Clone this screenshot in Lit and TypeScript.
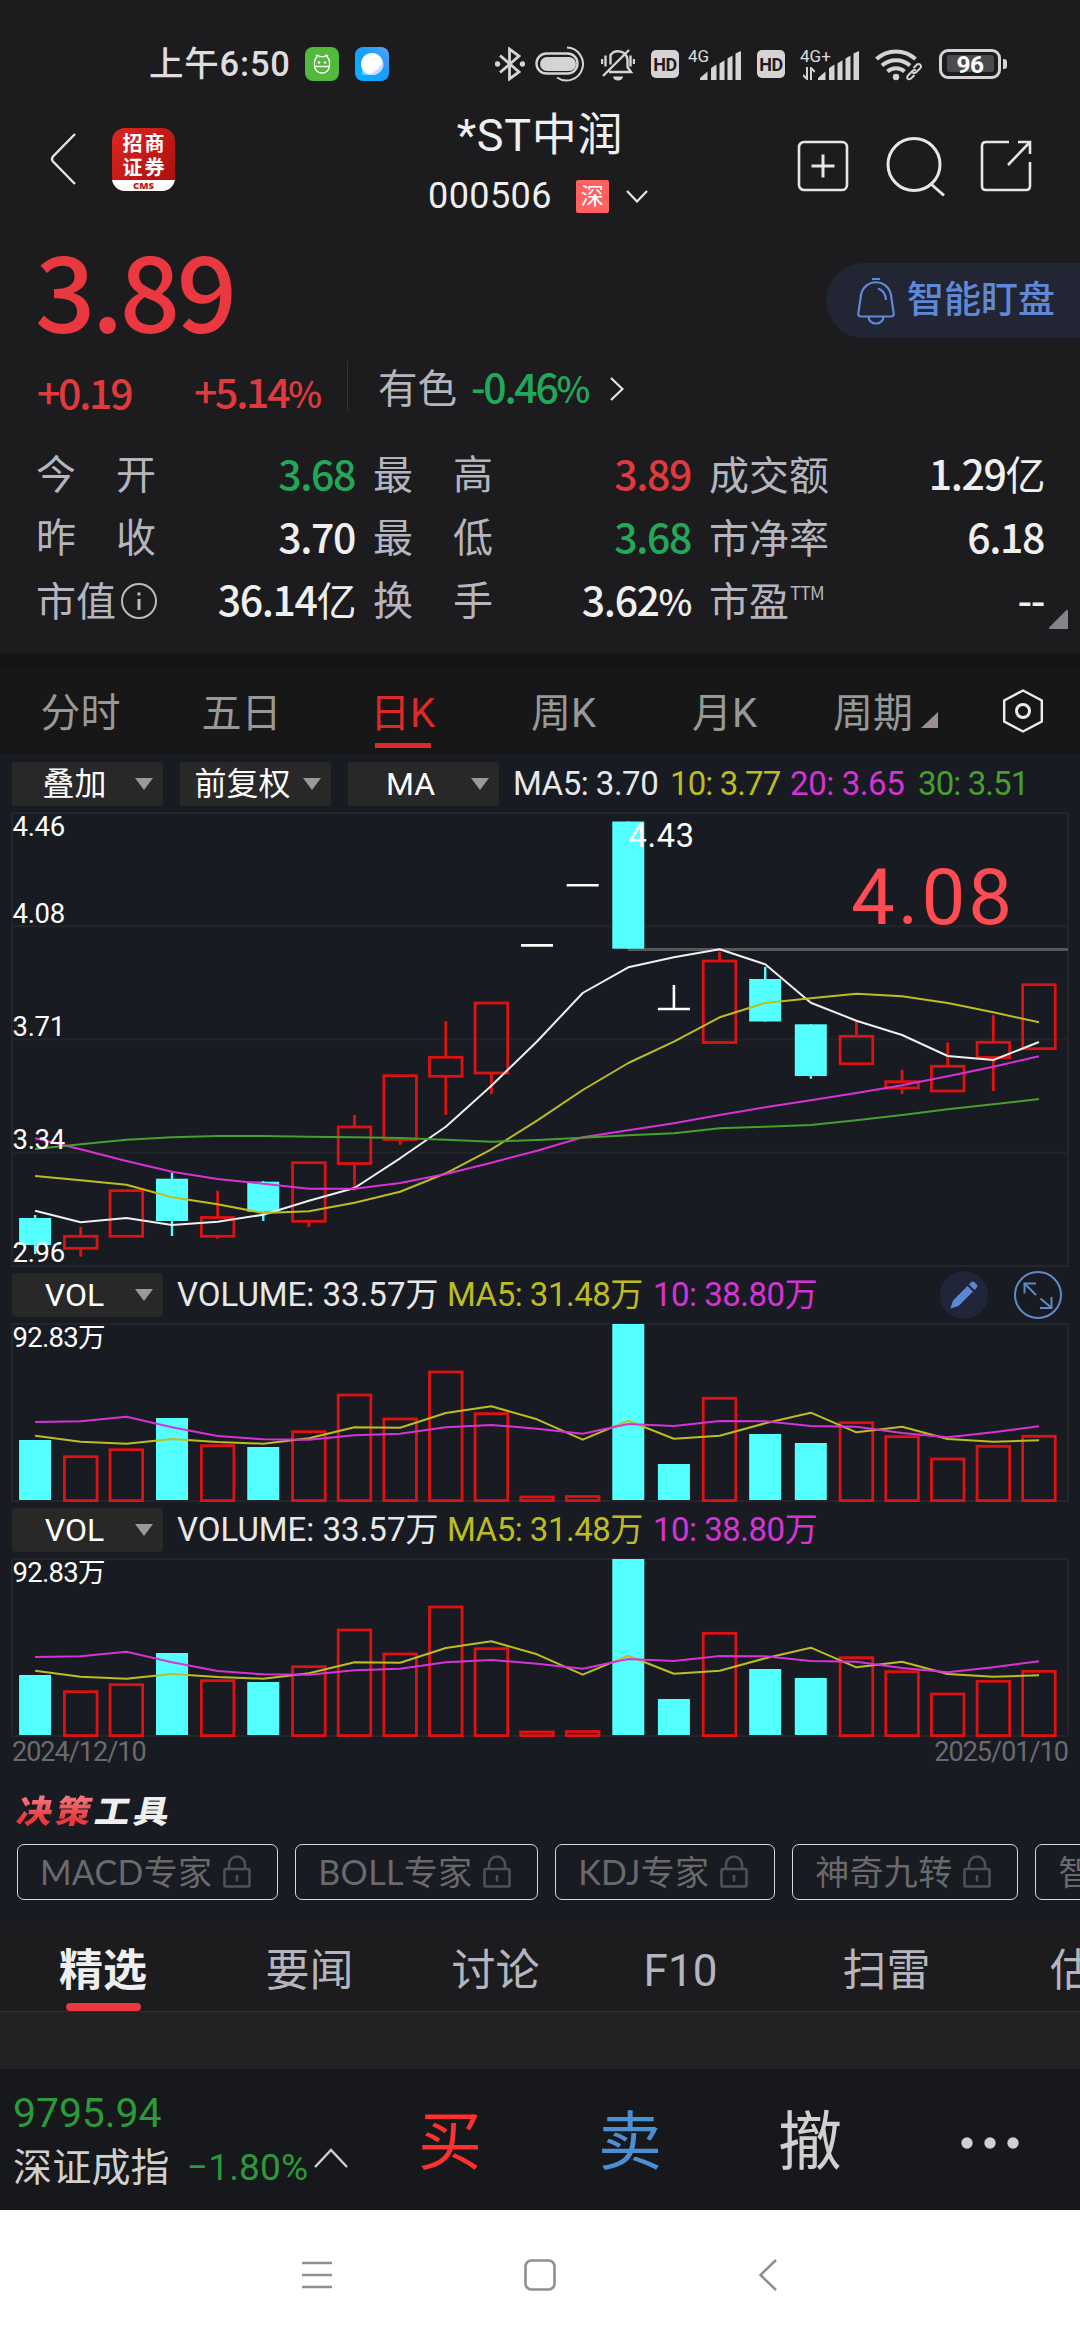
import { LitElement, html, svg, css } from "lit";
import { customElement, property } from "lit/decorators.js";
import { classMap } from "lit/directives/class-map.js";

type Kind = "up" | "down" | "flat";
interface Candle {
  kind: Kind;
  top: number;
  bottom: number;
  high: number;
  low: number;
}

const STEP = 45.63;
const FIRST = 23.1;
const xAt = (i: number) => FIRST + i * STEP;

const c = (kind: Kind, top: number, bottom: number, high = top, low = bottom): Candle => ({ kind, top, bottom, high, low });

/* Vertical positions inside the 453px tall price pane. */
const CANDLES: Candle[] = [
  c("down", 405, 432, 402, 441),
  c("up", 423.3, 435.3, 414, 443.7),
  c("up", 377.7, 423.3),
  c("down", 365.7, 408, 359.7, 423),
  c("up", 404.5, 423.3, 377.7, 425.7),
  c("down", 368.7, 398.7, 368, 408),
  c("up", 349.7, 408.3, 349.7, 414),
  c("up", 314, 350.5, 302, 377.7),
  c("up", 262.7, 326.5, 262.7, 332),
  c("up", 244.3, 263.3, 208.3, 302),
  c("up", 190, 260, 190, 281),
  c("flat", 132.4, 132.4),
  c("flat", 72.3, 72.3),
  c("down", 8.5, 135.7),
  c("flat", 196, 196, 172, 196),
  c("up", 148, 229.5, 138.7, 229.5),
  c("down", 166, 208.5, 154, 208.5),
  c("down", 211.3, 263, 211.3, 265.7),
  c("up", 223.3, 250.8, 208.3, 250.8),
  c("up", 268.7, 275, 256.7, 281),
  c("up", 253.3, 278, 229.3, 278),
  c("up", 229.3, 244.5, 202, 278),
  c("up", 171.7, 235.7),
];

const MA5 = [397.7, 409.3, 405, 412, 408.7, 401.7, 387.7, 375, 345.3, 313.7, 272.7, 228.5, 180, 154.3, 144.3, 136.3, 151.3, 189.7, 207.7, 222, 243, 247, 229];
const MA10 = [363, 367.3, 371.7, 384.3, 391.3, 400, 398.3, 389.7, 378.7, 360.3, 336.3, 307.7, 277, 250, 228.7, 204.3, 190, 185.3, 180.7, 183.3, 190, 199.3, 209.3];
const MA20 = [325.3, 336.3, 348, 358.7, 366, 370.7, 375.7, 375.7, 370, 361, 349.7, 337.7, 324.3, 317.3, 310.3, 302, 294.3, 287.3, 280, 272.3, 263.3, 253.7, 243.3];
const MA30 = [336, 331.3, 326.7, 324.3, 323, 323, 323.7, 324.3, 325, 326.7, 328.7, 327, 324.7, 322.3, 320.3, 315.3, 313.7, 312, 307.3, 302, 296.3, 291.3, 286];

/* Distance of each volume bar's top from the top of its 177px tall pane. */
const VOLUMES: [Kind, number][] = [
  ["down", 116], ["up", 132.7], ["up", 125.7], ["down", 94], ["up", 121.7], ["down", 123],
  ["up", 107.7], ["up", 71], ["up", 95], ["up", 48], ["up", 89.7], ["up", 173], ["up", 172.5],
  ["down", 0], ["down", 140], ["up", 74.3], ["down", 110], ["down", 119], ["up", 98.7],
  ["up", 112.7], ["up", 135], ["up", 122.3], ["up", 112.3],
];
const VMA5 = [111.7, 117.7, 119.7, 115, 118, 119.7, 114.3, 103.3, 103.7, 89, 82.3, 95.3, 115.7, 96.7, 114.7, 111.7, 99.3, 88.7, 108.3, 102.7, 115, 117.7, 116.3];
const VMA10 = [98, 97.3, 92.7, 103.3, 112, 115.3, 115.7, 111.3, 109.7, 103.3, 101, 104.7, 109.7, 100, 102, 97, 97.3, 102, 102.7, 109, 113.3, 108.3, 102.3];

const points = (ys: number[]) => ys.map((y, i) => `${xAt(i).toFixed(1)},${y}`).join(" ");

@customElement("price-chart")
export class PriceChart extends LitElement {
  static styles = css`
    :host { display: block; height: 453px; }
    svg { display: block; overflow: visible; font-family: Roboto, "Noto Sans CJK SC", sans-serif; }
    .grid { fill: none; stroke: #23252a; stroke-width: 2; }
    .up { fill: none; stroke: #dd1212; stroke-width: 2.8; }
    .down { fill: #54ffff; stroke: none; }
    .downwick { stroke: #54ffff; stroke-width: 2.4; }
    .flat { stroke: #fff; stroke-width: 2.6; }
    .line { fill: none; stroke-width: 2; stroke-linejoin: round; }
    .axis { fill: #fff; font-size: 27.5px; letter-spacing: -0.3px; }
    .peak { fill: #fff; font-size: 32.5px; letter-spacing: 0.7px; }
    .limit { fill: #ff4c52; font-size: 78px; letter-spacing: 3px; }
  `;

  private candle(k: Candle, i: number) {
    const x = xAt(i);
    if (k.kind === "flat") {
      return svg`<path class="flat" d="M${x - 16} ${k.top}h32M${x} ${k.high}V${k.low}" />`;
    }
    if (k.kind === "down") {
      return svg`<path class="downwick" d="M${x} ${k.high}V${k.low}" />
        <rect class="down" x=${x - 16} y=${k.top} width="32" height=${k.bottom - k.top} />`;
    }
    return svg`<path class="up" d="M${x} ${k.high}V${k.top}M${x} ${k.bottom}V${k.low}" />
      <rect class="up" x=${x - 16.3} y=${k.top} width="32.6" height=${k.bottom - k.top} />`;
  }

  render() {
    return html`<svg width="1056" height="453" viewBox="0 0 1056 453">
      <path class="grid" d="M0 0H1056V453H0ZM0 113.3H1056M0 226.5H1056M0 339.5H1056" />
      <path d="M616 136.5H1056" stroke="#56575b" stroke-width="3" />
      ${CANDLES.map((k, i) => this.candle(k, i))}
      <polyline class="line" stroke="#f0f0f0" points=${points(MA5)} />
      <polyline class="line" stroke="#bdbd22" points=${points(MA10)} />
      <polyline class="line" stroke="#d633d6" points=${points(MA20)} />
      <polyline class="line" stroke="#46a02c" points=${points(MA30)} />
      <text class="axis" x="0.5" y="23">4.46</text>
      <text class="axis" x="0.5" y="110">4.08</text>
      <text class="axis" x="0.5" y="223">3.71</text>
      <text class="axis" x="0.5" y="336">3.34</text>
      <text class="axis" x="0.5" y="449">2.96</text>
      <text class="peak" x="616.5" y="34">4.43</text>
      <text class="limit" x="839" y="110.5">4.08</text>
    </svg>`;
  }
}

@customElement("volume-chart")
export class VolumeChart extends LitElement {
  static styles = css`
    :host { display: block; height: 177px; }
    svg { display: block; overflow: visible; font-family: Roboto, "Noto Sans CJK SC", sans-serif; }
    .grid { fill: none; stroke: #23252a; stroke-width: 2; }
    .up { fill: none; stroke: #dd1212; stroke-width: 2.8; }
    .down { fill: #54ffff; }
    .line { fill: none; stroke-width: 2; stroke-linejoin: round; }
    .axis { fill: #fff; font-size: 27.5px; letter-spacing: -0.7px; }
  `;

  render() {
    return html`<svg width="1056" height="177" viewBox="0 0 1056 177">
      <rect class="grid" width="1056" height="177" />
      ${VOLUMES.map(([kind, top], i) =>
        kind === "down"
          ? svg`<rect class="down" x=${xAt(i) - 16} y=${top} width="32" height=${176 - top} />`
          : svg`<rect class="up" x=${xAt(i) - 16.3} y=${top} width="32.6" height=${176.6 - top} />`
      )}
      <polyline class="line" stroke="#bdbd22" points=${points(VMA5)} />
      <polyline class="line" stroke="#d633d6" points=${points(VMA10)} />
      <text class="axis" x="0.5" y="23">92.83万</text>
    </svg>`;
  }
}

@customElement("drop-button")
export class DropButton extends LitElement {
  @property() label = "";
  static styles = css`
    :host { display: flex; align-items: center; width: 151px; height: 44px; background: #282828; border-radius: 4px; color: #fff; font-size: 32px; line-height: 46px; }
    .label { width: 125px; text-align: center; white-space: nowrap; }
    .caret { display: block; margin-left: -2px; }
  `;
  render() {
    return html`<span class="label">${this.label}</span>
      <svg class="caret" width="18" height="12" viewBox="0 0 18 12"><path d="M0 0H18L9 12Z" fill="#9a9a9a" /></svg>`;
  }
}

const lock = html`<svg width="28" height="34" viewBox="0 0 28 34" fill="none" stroke="#505154" stroke-width="2.6">
  <rect x="1.5" y="14" width="25" height="17.5" rx="1.5" /><path d="M6 14V9.5a8 8 0 0 1 16 0V14M14 20v6.5" /></svg>`;

const signal = html`<svg class="bars" width="41" height="29" viewBox="0 0 41 29" fill="#d4d4d4">
  <path d="M0 29v-2l7.5-6.5V29ZM11 29V17l5.5-3.5V29ZM19.5 29V12.5l5-3.2V29ZM27.5 29V7.5l5-3V29ZM35.5 29V2.5L41 0v29Z" /></svg>`;

@customElement("app-root")
export class AppRoot extends LitElement {
  static styles = css`
    :host { display: block; width: 1080px; height: 2340px; overflow: hidden; background: #1c1c1e; font-family: Roboto, "Noto Sans CJK SC", sans-serif; color: #efefef; }
    * { box-sizing: border-box; }
    svg { display: block; flex: none; }
    span { white-space: nowrap; }

    .status { display: flex; align-items: center; height: 94px; padding: 33px 0 0 149px; color: #dedede; }
    .clock { width: 156px; font-size: 34.5px; font-weight: 500; line-height: 60px; letter-spacing: 0.8px; }
    .app { margin-right: 16px; }
    .sys { display: flex; align-items: center; margin-left: 90px; }
    .pill { margin-left: 10px; }
    .gap16 { margin-left: 16px; }
    .hd { width: 28px; height: 28px; margin-left: 16px; border-radius: 5px; background: #d4d4d4; color: #1c1c1e; font-size: 18px; font-weight: 700; line-height: 29px; text-align: center; letter-spacing: -0.5px; }
    .net { display: flex; width: 53px; margin-left: 9px; height: 32px; }
    .net.second { width: 59px; margin-left: 15px; }
    .gen { width: 12px; font-size: 17px; line-height: 16px; }
    .netcol { width: 12px; display: flex; flex-direction: column; }
    .net.second .netcol { width: 18px; }
    .bars { align-self: flex-end; }
    .arrows { margin: 3px 0 0 3px; }
    .battery { display: flex; align-items: center; justify-content: center; width: 62px; height: 30px; border: 3.5px solid #d4d4d4; border-radius: 9px; margin-left: 16px; padding: 3px; }
    .level { width: 47px; height: 17px; background: #4b4b4d; border-radius: 2px; color: #fff; font-size: 24.5px; font-weight: 700; line-height: 19px; text-align: center; letter-spacing: -0.5px; }
    .tip { width: 4px; height: 10px; border-radius: 0 3px 3px 0; background: #d4d4d4; margin-left: 2px; }

    .header { display: grid; grid-template-columns: 380px 320px 380px; height: 134px; }
    .left { display: flex; align-items: center; padding: 0 0 4px 50px; }
    .logo { display: flex; flex-direction: column; width: 63px; height: 63px; margin-left: 36px; border-radius: 13px; overflow: hidden; background: linear-gradient(135deg, #e02622, #a50d0c); color: #fff; font-family: "Noto Sans CJK SC", sans-serif; font-size: 20px; font-weight: 700; line-height: 24px; text-align: center; }
    .logoname { height: 52px; padding: 3px 0 0 2px; letter-spacing: 2px; }
    .cms { height: 11px; background: #fff; color: #c01918; font: 800 9.5px/11px "Open Sans", sans-serif; }
    .title { display: flex; flex-direction: column; align-items: center; padding-top: 14px; }
    .name { font-size: 45px; line-height: 56px; letter-spacing: 0.7px; }
    .code { display: flex; align-items: center; height: 64px; font-size: 36px; letter-spacing: 0.4px; }
    .market { width: 33px; height: 33px; margin: 0 17px 0 24px; border-radius: 2px; background: #ff6060; color: #fff; font-size: 23px; line-height: 34px; text-align: center; }
    .chev { margin-right: 4px; }
    .actions { display: flex; align-items: center; padding: 10px 0 0 97px; }
    .search { margin-left: 36px; }
    .share { margin-left: 33px; }

    .price { display: flex; justify-content: space-between; height: 133px; padding-left: 35px; }
    .last { font: 500 106px/119px "Noto Sans CJK SC", sans-serif; letter-spacing: -3.6px; color: #e9383f; }
    .watch { display: flex; align-items: center; width: 254px; height: 75px; margin-top: 35px; padding-left: 31px; border-radius: 38px 0 0 38px; background: #212534; color: #6088d8; font-size: 37px; font-weight: 500; line-height: 77px; }
    .watch span { margin-left: 12px; }
    .change { display: flex; align-items: center; height: 60px; font-family: "Noto Sans CJK SC", sans-serif; font-size: 41px; line-height: 60px; font-weight: 500; letter-spacing: -2.3px; color: #e0393e; }
    .small { font-size: 36px; }
    .delta { width: 156px; padding-left: 37px; }
    .pct { width: 155px; padding-left: 38px; }
    .rule { width: 1px; height: 50px; background: #343438; margin-left: 36px; margin-top: -10px; }
    .sector { margin: -10px 14px 0 30px; font-size: 39.5px; font-weight: 400; letter-spacing: 0; color: #b5b5bf; }
    .sectorpct { margin: -10px 22px 0 0; color: #22a85b; }
    .arrow { margin-top: -4px; }
    .stats { display: grid; grid-template-columns: 337px 336px 335px; height: 232px; padding: 22px 0 0 36px; grid-auto-rows: 63.2px; font-family: "Noto Sans CJK SC", sans-serif; }
    .stat { display: flex; justify-content: space-between; padding-right: 18px; margin-top: -2px; line-height: 63px; }
    .stat.end { padding-right: 0; }
    .label { display: flex; justify-content: space-between; width: 120px; font-size: 40px; color: #b5b5bf; }
    .label.tight { justify-content: flex-start; align-items: center; }
    .info { margin: 2px 0 0 4px; }
    .ttm { font-size: 18px; line-height: 51px; align-self: flex-start; letter-spacing: -0.8px; margin-left: 1px; }
    .value { font-size: 41px; font-weight: 500; letter-spacing: -1.4px; }
    .unit { font-size: 40px; font-weight: 400; }
    .green { color: #22a85b; }
    .red { color: #e0393e; }
    .more { margin: -43px 12px 24px auto; }

    .periods { display: flex; height: 101px; background: #171717; border-top: 14px solid #151517; font-size: 40px; color: #989898; }
    .period { display: flex; flex-direction: column; align-items: center; width: 161px; line-height: 76px; padding-top: 9px; height: 87px; }
    .period.active { color: #dd2a28; }
    .underline { width: 56px; height: 5px; background: #dd2a28; margin-top: -9px; }
    .withmark { display: flex; align-items: center; gap: 8px; }
    .withmark svg { margin-top: 12px; }
    .settings { margin: 22px 0 0 37px; }

    .charts { height: 1170px; padding: 8px 12px 0; background: #191b22; }
    .bar { display: flex; align-items: center; height: 51px; padding-bottom: 7px; font-size: 33px; line-height: 46px; letter-spacing: -0.9px; color: #e8e8e8; }
    .bar drop-button { margin-right: 17px; letter-spacing: 0; }
    .bar drop-button:last-of-type { margin-right: 14px; }
    .bar.vol { margin-top: 7px; letter-spacing: -0.5px; }
    .y { color: #bdbd22; }
    .m { color: #d633d6; }
    .g { color: #46a02c; }
    .w157 { width: 157px; letter-spacing: -0.5px; } .w120 { width: 120px; } .w128 { width: 128px; letter-spacing: -0.4px; }
    .w270 { width: 270px; letter-spacing: 0; } .w206 { width: 206px; }
    .tools { display: flex; margin-left: auto; margin-right: 6px; gap: 26px; }
    .dates { display: flex; justify-content: space-between; height: 40px; line-height: 33px; font-size: 27px; color: #6b6b6d; letter-spacing: -1px; }
    .dectitle { display: flex; height: 68px; padding-left: 6px; font: 900 35px/66px "Noto Sans CJK SC", sans-serif; letter-spacing: 3.8px; }
    .dectitle span { display: block; transform: skewX(-12deg) scaleY(0.92); }
    .warm { background: linear-gradient(#f2767a 30%, #e9383f 65%); -webkit-background-clip: text; background-clip: text; color: transparent; }
    .chips { display: flex; gap: 17px; padding-left: 5px; width: 1100px; }
    .chip { display: flex; align-items: center; flex: none; gap: 11px; height: 56px; padding: 0 26px 0 22px; border: 1px solid #d8d8dc; border-radius: 7px; font-family: Lato, "Noto Sans CJK SC", sans-serif; font-size: 34px; line-height: 54px; letter-spacing: 0.3px; color: #6a6a6c; }

    .tabs { display: flex; height: 88px; border-bottom: 1px solid #2e2e31; font-size: 44px; line-height: 94px; color: #b5b5bf; }
    .tab { display: flex; flex-direction: column; align-items: center; height: 87px; flex: none; }
    .tab.active { color: #efefef; font-weight: 700; }
    .tabline { width: 75px; height: 8px; border-radius: 4px; background: #e9383f; margin-top: -15px; }
    .strip { height: 57px; background: #222; }

    .trade { display: grid; grid-template-columns: 360px 180px 180px 180px 180px; height: 141px; background: #17181b; }
    .index { display: flex; flex-direction: column; padding: 15px 0 0 13px; color: #2a9a3a; font-size: 41px; line-height: 58px; }
    .points { letter-spacing: -0.1px; }
    .idxrow { display: flex; align-items: center; font-size: 37px; line-height: 52px; letter-spacing: 0.2px; }
    .idxname { color: #d0d0d0; font-size: 39px; margin-right: 17px; }
    .idxrow svg { margin: -20px 0 0 6px; }
    .action { display: flex; align-items: center; justify-content: center; font-size: 64px; line-height: 147px; }
    .buy { color: #ff302d; } .sell { color: #4a90d2; } .cancel { color: #d0d0d0; }
    .nav { display: flex; align-items: center; height: 130px; background: #fff; }
    .menu { margin-left: 302px; }
    .home { margin-left: 192px; }
    .back { margin-left: 203px; }
  `;

  private stat(label: unknown, value: unknown, tone = "", end = false, tight = false) {
    return html`<div class=${classMap({ stat: true, end })}>
      <span class=${classMap({ label: true, tight })}>${label}</span>
      <span class=${classMap({ value: true, green: tone === "green", red: tone === "red" })}>${value}</span>
    </div>`;
  }

  private pair(a: string, b: string) {
    return html`<span>${a}</span><span>${b}</span>`;
  }

  private volumeBar(withTools: boolean) {
    return html`<div class="bar vol">
      <drop-button label="VOL"></drop-button>
      <span class="w270">VOLUME: 33.57万</span>
      <span class="y w206">MA5: 31.48万</span>
      <span class="m">10: 38.80万</span>
      ${withTools
        ? html`<div class="tools">
            <svg width="48" height="48" viewBox="0 0 48 48">
              <circle cx="24" cy="24" r="24" fill="#20253a" />
              <path d="M10.5 37.5 13 29.5 27.5 15 33 20.5 18.5 35ZM29 13.5 31.5 11q1.500-1 3 .3l2.300 2.300q1.200 1.400 0 2.900L34.500 19Z" fill="#5d86d6" />
            </svg>
            <svg width="48" height="48" viewBox="0 0 48 48" fill="none" stroke="#5f8cc4" stroke-width="2">
              <circle cx="24" cy="24" r="23" /><path d="M10.500 22.500V12.500H22M11 13 22 24M37.500 26V37H26M37 36.500 26.500 27.500" />
            </svg>
          </div>`
        : ""}
    </div>`;
  }

  render() {
    const chips = ["MACD专家", "BOLL专家", "KDJ专家", "神奇九转", "智能选股"];
    const tabs: [string, number, boolean][] = [
      ["精选", 206, true], ["要闻", 207, false], ["讨论", 165, false],
      ["F10", 205, false], ["扫雷", 207, false], ["估值", 208, false],
    ];
    return html`
      <div class="status">
        <span class="clock">上午6:50</span>
        <svg class="app" width="34" height="34" viewBox="0 0 34 34">
          <rect width="34" height="34" rx="8" fill="#52b93a" />
          <g fill="none" stroke="#fff" stroke-width="1.300"><path d="M9.500 17.500V15.500q0-4 2.500-5.500L11.500 8.500h2l1 1.200h5l1-1.200h2L22 10q2.500 1.500 2.500 5.500v3.500a7.500 7 0 0 1-15 0ZM9.500 19.500H24.500" /></g>
          <circle cx="14" cy="15.500" r="1.200" fill="#fff" /><circle cx="20" cy="15.500" r="1.200" fill="#fff" />
        </svg>
        <svg class="app" width="34" height="34" viewBox="0 0 34 34">
          <defs><linearGradient id="sky" x1="0" y1="1" x2="1" y2="0"><stop offset="0" stop-color="#00b4ff" /><stop offset=".6" stop-color="#1e9bff" /><stop offset="1" stop-color="#5aa4f5" /></linearGradient></defs>
          <rect width="34" height="34" rx="8" fill="url(#sky)" /><path d="M7 17V28H17Z" fill="#5fd2ff" />
          <circle cx="17" cy="17" r="11" fill="#fff" /><path d="M28 14a11 11 0 0 1-14 13.500Q24 24 28 14Z" fill="#c4dcf8" />
        </svg>
        <div class="sys">
          <svg width="30" height="34" viewBox="0 0 30 34" fill="none" stroke="#d4d4d4" stroke-width="2.800">
            <path d="M5 8.500 24 25 14.500 32V2L24 9 5 25.500" /><circle cx="2.500" cy="17" r="1.300" /><circle cx="27.500" cy="17" r="1.300" />
          </svg>
          <svg class="pill" width="50" height="36" viewBox="0 0 50 36" fill="none" stroke="#d4d4d4">
            <rect x="1.500" y="7.500" width="41" height="20" rx="10" stroke-width="2.400" /><rect x="5" y="11" width="36" height="14" rx="7" fill="#d4d4d4" stroke="none" />
            <path d="M32 1.500A16.500 16.500 0 1 1 22 31.500" stroke-width="2" />
          </svg>
          <svg class="gap16" width="34" height="34" viewBox="0 0 34 34" fill="none" stroke="#d4d4d4" stroke-width="2.400">
            <path d="M8 25H30L26.500 20V13a9.500 9.500 0 0 0-17-5V17.500M2 29 28 3M1 12v5M4.500 8.500v11M33 12v5M29.500 8.500v11" /><path d="M12 29.500a5 4 0 0 0 10 0Z" fill="#d4d4d4" stroke="none" />
          </svg>
          <span class="hd">HD</span>
          <div class="net"><div class="netcol"><span class="gen">4G</span></div>${signal}</div>
          <span class="hd">HD</span>
          <div class="net second"><div class="netcol"><span class="gen">4G+</span>
            <svg class="arrows" width="12" height="13" viewBox="0 0 12 13" fill="none" stroke="#d4d4d4" stroke-width="2"><path d="M4 0V12L0 8M8 13V1L12 5" /></svg></div>${signal}</div>
          <svg class="gap16" width="48" height="34" viewBox="0 0 48 34" fill="none" stroke="#d4d4d4" stroke-width="4">
            <path d="M1.500 12a29 29 0 0 1 39 0M7 18.500a21 21 0 0 1 28 0M12.500 24.500a13 13 0 0 1 17 0" /><circle cx="21" cy="30" r="3.200" fill="#d4d4d4" stroke="none" />
            <path d="m38.500 21 3.500-3.500q2-1 3.300.3 1.200 1.400.2 3.200L41 25.500M39 24l-6 5.500q-1.500 2-.3 3.300 1.400 1 3.300-.3l3.500-3.500" stroke="#1c1c1e" stroke-width="5" /><path d="m38.500 21 3.500-3.500q2-1 3.300.3 1.200 1.400.2 3.200L41 25.500q-1.500 1-3.500 0M41 23.500q-2-1-3.500.5L33 28.500q-1.500 2-.3 3.300 1.400 1 3.300-.3l3.500-3.500" stroke-width="2" />
          </svg>
          <div class="battery"><span class="level">96</span></div><div class="tip"></div>
        </div>
      </div>

      <div class="header">
        <div class="left">
          <svg width="26" height="52" viewBox="0 0 26 52" fill="none" stroke="#e6e6e6" stroke-width="2.400"><path d="M25 1 3 23.500q-2 2.500 0 5L25 51" /></svg>
          <div class="logo"><div class="logoname">招商<br />证券</div><div class="cms">CMS</div></div>
        </div>
        <div class="title">
          <span class="name">*ST中润</span>
          <div class="code"><span>000506</span><span class="market">深</span>
            <svg class="chev" width="22" height="13" viewBox="0 0 22 13" fill="none" stroke="#e6e6e6" stroke-width="2.200"><path d="M1 1 11 11.500 21 1" /></svg></div>
        </div>
        <div class="actions">
          <svg width="52" height="52" viewBox="0 0 52 52" fill="none" stroke="#e6e6e6" stroke-width="2.600"><rect x="2" y="2" width="48" height="48" rx="5" /><path d="M26 14.500V37.500M14.500 26H37.500" stroke-width="3" /></svg>
          <svg class="search" width="62" height="62" viewBox="0 0 62 62" fill="none" stroke="#e6e6e6" stroke-width="3"><circle cx="29" cy="29.500" r="26" /><path d="M46 49 59 60.500" /></svg>
          <svg class="share" width="52" height="52" viewBox="0 0 52 52" fill="none" stroke="#e6e6e6" stroke-width="2.600"><path d="M29 2H6Q2 2 2 6V46Q2 50 6 50H46Q50 50 50 46V22M38 2H50V14M50 2 28 25" /></svg>
        </div>
      </div>

      <div class="price">
        <span class="last">3.89</span>
        <div class="watch">
          <svg width="38" height="48" viewBox="0 0 38 48" fill="none" stroke="#6088d8" stroke-width="2.200">
            <path d="M4 39.500Q1 39.500 1.300 36.500L4 18A15.200 15.200 0 0 1 34 18L36.700 36.500Q37 39.500 34 39.500ZM11.500 40a7.500 6.500 0 0 0 15 0M15 2H23M21 11.500q7.500 2.500 8 11.500" /></svg>
          <span>智能盯盘</span>
        </div>
      </div>
      <div class="change">
        <span class="delta">+0.19</span><span class="pct">+5.14<span class="small">%</span></span><div class="rule"></div>
        <span class="sector">有色</span><span class="sectorpct">-0.46<span class="small">%</span></span>
        <svg class="arrow" width="14" height="24" viewBox="0 0 14 24" fill="none" stroke="#e6e6e6" stroke-width="2.200"><path d="M1 1 12.500 12 1 23" /></svg>
      </div>
      <div class="stats">
        ${this.stat(this.pair("今", "开"), "3.68", "green")}
        ${this.stat(this.pair("最", "高"), "3.89", "red")}
        ${this.stat("成交额", html`1.29<span class="unit">亿</span>`, "", true, true)}
        ${this.stat(this.pair("昨", "收"), "3.70")}
        ${this.stat(this.pair("最", "低"), "3.68", "green")}
        ${this.stat("市净率", "6.18", "", true, true)}
        ${this.stat(html`市值<svg class="info" width="38" height="38" viewBox="0 0 38 38" fill="none" stroke="#bcbcbc" stroke-width="2"><circle cx="19" cy="19" r="17" /><path d="M19 17V28M19 10.500V13.500" stroke-width="3" /></svg>`, html`36.14<span class="unit">亿</span>`, "", false, true)}
        ${this.stat(this.pair("换", "手"), html`3.62<span class="small">%</span>`)}
        ${this.stat(html`市盈<span class="ttm">TTM</span>`, "--", "", true, true)}
      </div>
      <svg class="more" width="19" height="19" viewBox="0 0 19 19"><path d="M18 1V18H1Z" fill="#85848a" stroke="#85848a" stroke-linejoin="round" stroke-width="2" /></svg>

      <div class="periods">
        <span class="period">分时</span><span class="period">五日</span>
        <div class="period active"><span>日K</span><div class="underline"></div></div>
        <span class="period">周K</span><span class="period">月K</span>
        <div class="period"><div class="withmark"><span>周期</span><svg width="17" height="16" viewBox="0 0 17 16"><path d="M17 0V16H0Z" fill="#9c8f90" /></svg></div></div>
        <svg class="settings" width="40" height="44" viewBox="0 0 40 44" fill="none" stroke="#ededed" stroke-width="2.400"><path d="M20 1.500 38.800 11.500V32.500L20 42.500 1.200 32.500V11.500Z" /><circle cx="20" cy="22" r="6.500" stroke-width="3" /></svg>
      </div>

      <div class="charts">
        <div class="bar">
          <drop-button label="叠加"></drop-button><drop-button label="前复权"></drop-button><drop-button label="MA"></drop-button>
          <span class="w157">MA5: 3.70</span><span class="y w120">10: 3.77</span><span class="m w128">20: 3.65</span><span class="g">30: 3.51</span>
        </div>
        <price-chart></price-chart>
        ${this.volumeBar(true)}
        <volume-chart></volume-chart>
        ${this.volumeBar(false)}
        <volume-chart></volume-chart>
        <div class="dates"><span>2024/12/10</span><span>2025/01/10</span></div>
        <div class="dectitle"><span class="warm">决策</span><span>工具</span></div>
        <div class="chips">${chips.map((t) => html`<div class="chip"><span>${t}</span>${lock}</div>`)}</div>
      </div>

      <div class="tabs">
        ${tabs.map(([t, w, on]) => html`<div class=${classMap({ tab: true, active: on })} style="width:${w}px"><span>${t}</span>${on ? html`<div class="tabline"></div>` : ""}</div>`)}
      </div>
      <div class="strip"></div>

      <div class="trade">
        <div class="index">
          <span class="points">9795.94</span>
          <div class="idxrow"><span class="idxname">深证成指</span><span>−1.80%</span>
            <svg width="34" height="20" viewBox="0 0 34 20" fill="none" stroke="#d0d0d0" stroke-width="2.400"><path d="M1 19 17 2 33 19" /></svg></div>
        </div>
        <span class="action buy">买</span><span class="action sell">卖</span><span class="action cancel">撤</span>
        <span class="action"><svg width="58" height="12" viewBox="0 0 58 12" fill="#d0d0d0"><circle cx="6" cy="6" r="5.700" /><circle cx="29" cy="6" r="5.700" /><circle cx="52" cy="6" r="5.700" /></svg></span>
      </div>
      <div class="nav">
        <svg class="menu" width="30" height="28" viewBox="0 0 30 28" stroke="#909090" stroke-width="2.600"><path d="M0 2H30M0 14H30M0 26H30" /></svg>
        <svg class="home" width="32" height="32" viewBox="0 0 32 32" fill="none" stroke="#909090" stroke-width="2.600"><rect x="1.500" y="1.500" width="29" height="29" rx="6" /></svg>
        <svg class="back" width="18" height="32" viewBox="0 0 18 32" fill="none" stroke="#909090" stroke-width="2.600"><path d="M17 1 1.500 16 17 31" /></svg>
      </div>
    `;
  }
}
